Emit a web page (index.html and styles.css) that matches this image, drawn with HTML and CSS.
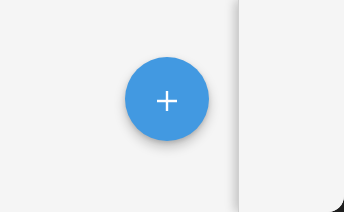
FILE: index.html
```html
<!DOCTYPE html>
<html>
<head>
<meta charset="utf-8">
<link rel="stylesheet" href="styles.css">
</head>
<body>
<div class="frame">
  <div class="main">
    <button class="fab" aria-label="Add">
      <svg width="22" height="22" viewBox="0 0 22 22"><path d="M11 1v20M1 11h20" stroke="#fff" stroke-width="2.4" fill="none"/></svg>
    </button>
  </div>
  <div class="panel"></div>
</div>
</body>
</html>
```
FILE: styles.css
```css
html, body {
  margin: 0;
  padding: 0;
  width: 344px;
  height: 212px;
  background: #1e1e1e;
  overflow: hidden;
}
.frame {
  display: flex;
  width: 344px;
  height: 212px;
  background: #f5f5f5;
  border-bottom-right-radius: 16px;
  overflow: hidden;
}
.main {
  width: 238px;
  flex: none;
  padding: 57px 0 0 125px;
  box-sizing: border-box;
}
.fab {
  width: 84px;
  height: 84px;
  border-radius: 50%;
  border: none;
  padding: 0;
  background: #4299e1;
  display: flex;
  align-items: center;
  justify-content: center;
  box-shadow: 0 6px 12px rgba(0,0,0,0.22), 0 2px 4px rgba(0,0,0,0.12);
}
.fab svg { margin-top: 4px; }
.panel {
  flex: 1;
  background: #f5f5f5;
  border-left: 1px solid #d0d0d0;
  box-shadow: -3px 0 10px rgba(0,0,0,0.22);
  position: relative;
}
```
